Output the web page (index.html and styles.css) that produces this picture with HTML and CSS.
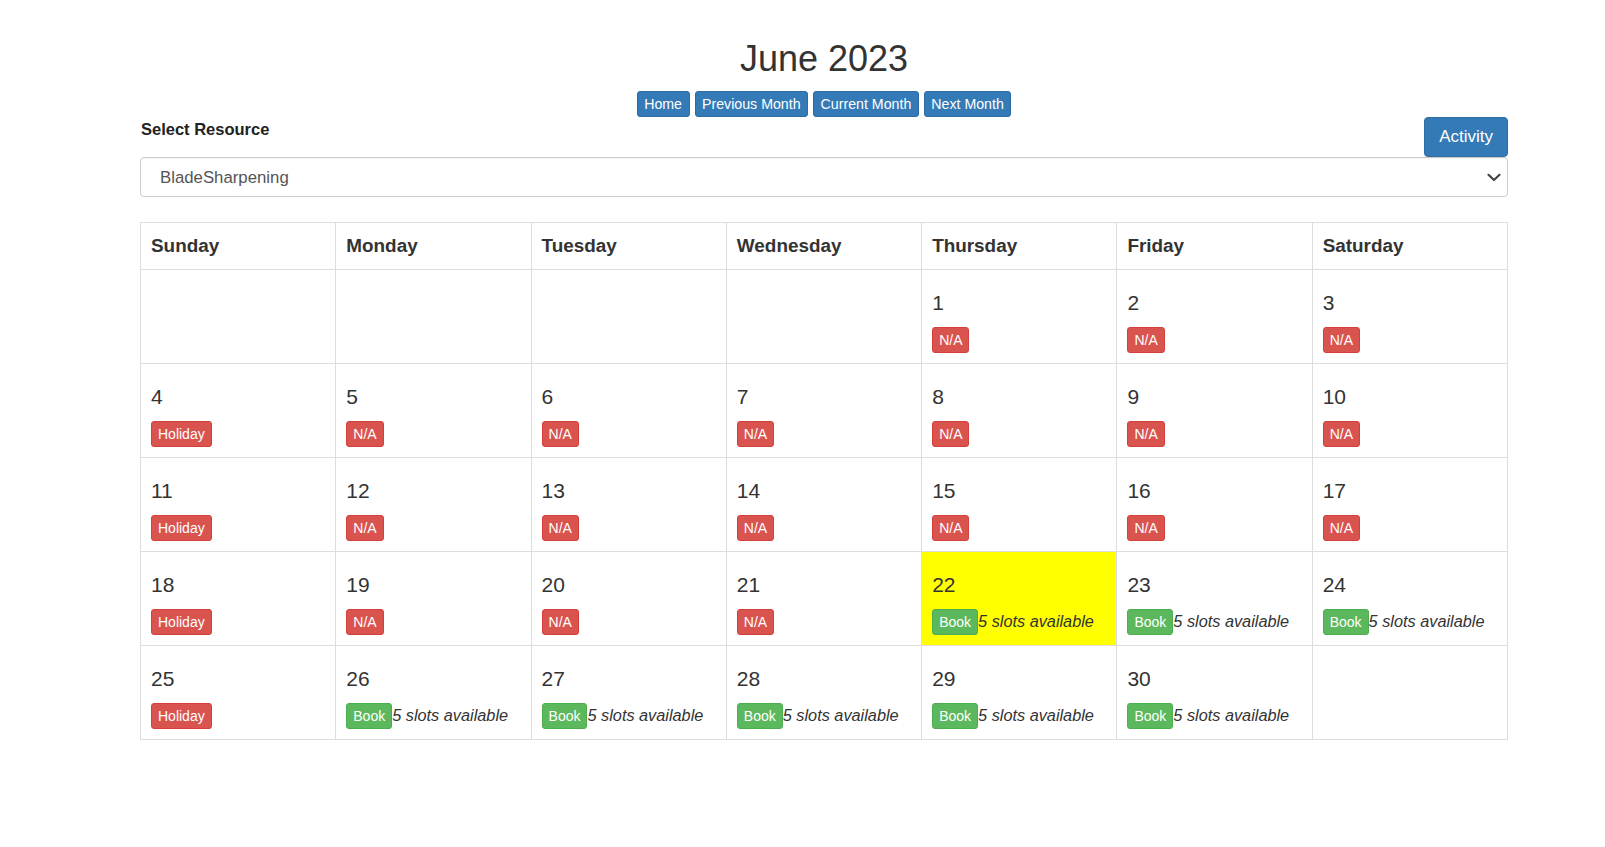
FILE: index.html
```html
<!DOCTYPE html>
<html lang="en">
<head>
<meta charset="utf-8">
<title>June 2023</title>
<link rel="stylesheet" href="styles.css">
</head>
<body>
<div class="container">
  <h1 class="title">June 2023</h1>
  <div class="nav">
    <a class="btn btn-primary btn-xs btn-nav">Home</a>
    <a class="btn btn-primary btn-xs btn-nav">Previous Month</a>
    <a class="btn btn-primary btn-xs btn-nav">Current Month</a>
    <a class="btn btn-primary btn-xs btn-nav">Next Month</a>
  </div>
  <div class="toolbar">
    <label class="label">Select Resource</label>
    <a class="btn btn-primary btn-md">Activity</a>
  </div>
  <div class="select-wrap">
    <select class="select">
      <option>BladeSharpening</option>
    </select>
    <svg class="chevron" width="14" height="9" viewBox="0 0 14 9"><path d="M1.5 1.8 L7 7 L12.5 1.8" fill="none" stroke="#444" stroke-width="2.2" stroke-linecap="round" stroke-linejoin="round"/></svg>
  </div>
  <table class="cal">
    <thead>
      <tr><th>Sunday</th><th>Monday</th><th>Tuesday</th><th>Wednesday</th><th>Thursday</th><th>Friday</th><th>Saturday</th></tr>
    </thead>
    <tbody>
      <tr>
        <td></td><td></td><td></td><td></td>
        <td><div class="day">1</div><div class="acts"><span class="btn btn-danger btn-xs">N/A</span></div></td>
        <td><div class="day">2</div><div class="acts"><span class="btn btn-danger btn-xs">N/A</span></div></td>
        <td><div class="day">3</div><div class="acts"><span class="btn btn-danger btn-xs">N/A</span></div></td>
      </tr>
      <tr>
        <td><div class="day">4</div><div class="acts"><span class="btn btn-danger btn-xs">Holiday</span></div></td>
        <td><div class="day">5</div><div class="acts"><span class="btn btn-danger btn-xs">N/A</span></div></td>
        <td><div class="day">6</div><div class="acts"><span class="btn btn-danger btn-xs">N/A</span></div></td>
        <td><div class="day">7</div><div class="acts"><span class="btn btn-danger btn-xs">N/A</span></div></td>
        <td><div class="day">8</div><div class="acts"><span class="btn btn-danger btn-xs">N/A</span></div></td>
        <td><div class="day">9</div><div class="acts"><span class="btn btn-danger btn-xs">N/A</span></div></td>
        <td><div class="day">10</div><div class="acts"><span class="btn btn-danger btn-xs">N/A</span></div></td>
      </tr>
      <tr>
        <td><div class="day">11</div><div class="acts"><span class="btn btn-danger btn-xs">Holiday</span></div></td>
        <td><div class="day">12</div><div class="acts"><span class="btn btn-danger btn-xs">N/A</span></div></td>
        <td><div class="day">13</div><div class="acts"><span class="btn btn-danger btn-xs">N/A</span></div></td>
        <td><div class="day">14</div><div class="acts"><span class="btn btn-danger btn-xs">N/A</span></div></td>
        <td><div class="day">15</div><div class="acts"><span class="btn btn-danger btn-xs">N/A</span></div></td>
        <td><div class="day">16</div><div class="acts"><span class="btn btn-danger btn-xs">N/A</span></div></td>
        <td><div class="day">17</div><div class="acts"><span class="btn btn-danger btn-xs">N/A</span></div></td>
      </tr>
      <tr>
        <td><div class="day">18</div><div class="acts"><span class="btn btn-danger btn-xs">Holiday</span></div></td>
        <td><div class="day">19</div><div class="acts"><span class="btn btn-danger btn-xs">N/A</span></div></td>
        <td><div class="day">20</div><div class="acts"><span class="btn btn-danger btn-xs">N/A</span></div></td>
        <td><div class="day">21</div><div class="acts"><span class="btn btn-danger btn-xs">N/A</span></div></td>
        <td class="today"><div class="day">22</div><div class="acts"><a class="btn btn-success btn-xs">Book</a><em class="slots">5 slots available</em></div></td>
        <td><div class="day">23</div><div class="acts"><a class="btn btn-success btn-xs">Book</a><em class="slots">5 slots available</em></div></td>
        <td><div class="day">24</div><div class="acts"><a class="btn btn-success btn-xs">Book</a><em class="slots">5 slots available</em></div></td>
      </tr>
      <tr>
        <td><div class="day">25</div><div class="acts"><span class="btn btn-danger btn-xs">Holiday</span></div></td>
        <td><div class="day">26</div><div class="acts"><a class="btn btn-success btn-xs">Book</a><em class="slots">5 slots available</em></div></td>
        <td><div class="day">27</div><div class="acts"><a class="btn btn-success btn-xs">Book</a><em class="slots">5 slots available</em></div></td>
        <td><div class="day">28</div><div class="acts"><a class="btn btn-success btn-xs">Book</a><em class="slots">5 slots available</em></div></td>
        <td><div class="day">29</div><div class="acts"><a class="btn btn-success btn-xs">Book</a><em class="slots">5 slots available</em></div></td>
        <td><div class="day">30</div><div class="acts"><a class="btn btn-success btn-xs">Book</a><em class="slots">5 slots available</em></div></td>
        <td></td>
      </tr>
    </tbody>
  </table>
</div>
</body>
</html>
```
FILE: styles.css
```css
html, body {
  margin: 0;
  padding: 0;
  background: #fff;
}
body {
  font-family: "Liberation Sans", Arial, Helvetica, sans-serif;
  color: #333;
  font-size: 14px;
  line-height: 20px;
}
.container {
  width: 1368px;
  margin: 0 97px 0 140px;
  padding-bottom: 108px;
}
.title {
  margin: 39px 0 0;
  font-size: 36px;
  line-height: 40px;
  font-weight: normal;
  text-align: center;
  color: #333;
}
.nav {
  margin-top: 12px;
  display: flex;
  justify-content: center;
  gap: 5px;
}
.btn {
  display: inline-block;
  box-sizing: border-box;
  border: 1px solid transparent;
  color: #fff;
  text-decoration: none;
  white-space: nowrap;
  cursor: pointer;
}
.btn-xs {
  font-size: 14px;
  line-height: 20px;
  padding: 2px 6px;
  border-radius: 3px;
}
.btn-nav {
  font-size: 14.2px;
  padding: 2px 6.5px;
}
.btn-md {
  font-size: 17px;
  line-height: 24px;
  padding: 7px 14px;
  border-radius: 4px;
}
.btn-primary {
  background: #337ab7;
  border-color: #2e6da4;
}
.btn-danger {
  background: #d9534f;
  border-color: #d43f3a;
}
.btn-success {
  background: #5cb85c;
  border-color: #4cae4c;
}
.toolbar {
  display: flex;
  justify-content: space-between;
  align-items: flex-start;
  height: 40px;
}
.label {
  font-weight: bold;
  font-size: 16.5px;
  line-height: 20px;
  padding-top: 2px;
  padding-left: 1px;
  color: #222;
}
.select-wrap {
  position: relative;
}
.select {
  display: block;
  width: 100%;
  height: 40px;
  box-sizing: border-box;
  border: 1px solid #ccc;
  border-radius: 4px;
  background: #fff;
  padding: 0 40px 0 19px;
  font-family: "Liberation Sans", Arial, sans-serif;
  font-size: 16.8px;
  color: #555;
  appearance: none;
  -webkit-appearance: none;
  box-shadow: inset 0 1px 1px rgba(0,0,0,0.04);
}
.chevron {
  position: absolute;
  top: 16px;
  right: 7px;
}
.cal {
  margin-top: 25px;
  width: 100%;
  table-layout: fixed;
  border-collapse: collapse;
  border: 1px solid #ddd;
}
.cal th, .cal td {
  border: 1px solid #ddd;
  text-align: left;
  vertical-align: top;
}
.cal th {
  padding: 10px;
  font-size: 18.9px;
  line-height: 26px;
  font-weight: bold;
  color: #333;
}
.cal td {
  padding: 10px 10px 9px;
  height: 74px;
}
.cal td.today {
  background: #ffff00;
}
.day {
  margin-top: 11px;
  font-size: 21px;
  line-height: 23px;
}
.acts {
  margin-top: 13px;
  margin-bottom: 1px;
  display: flex;
  align-items: baseline;
  height: 26px;
  white-space: nowrap;
}
.slots {
  font-style: italic;
  font-size: 16.3px;
  color: #333;
}
```
